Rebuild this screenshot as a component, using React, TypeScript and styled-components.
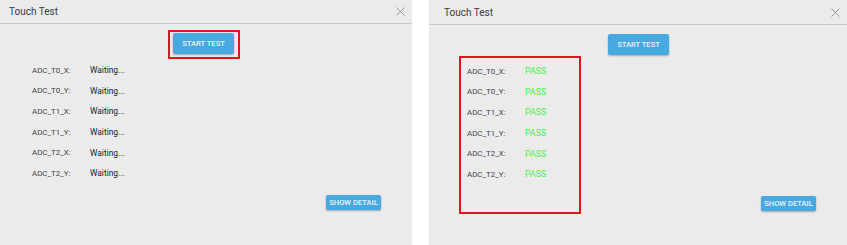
import React from 'react'
import styled, { createGlobalStyle } from 'styled-components'

const GlobalStyle = createGlobalStyle`
  html, body {
    margin: 0;
    padding: 0;
    background: #ffffff;
  }
  body {
    font-family: Roboto, "Liberation Sans", Arial, sans-serif;
    overflow: hidden;
  }
`

const channels = ['ADC_T0_X', 'ADC_T0_Y', 'ADC_T1_X', 'ADC_T1_Y', 'ADC_T2_X', 'ADC_T2_Y']

const Page = styled.div`
  display: flex;
  gap: 17px;
  width: 847px;
  height: 245px;
  overflow: hidden;
`

const Panel = styled.div<{ $shiftX: number; $shiftY: number }>`
  flex: 0 0 418px;
  height: 246px;
  margin-left: ${(p) => p.$shiftX}px;
  margin-top: ${(p) => p.$shiftY}px;
  background: #ebebeb;
  display: flex;
  flex-direction: column;
`

const Header = styled.div`
  height: 25px;
  box-sizing: border-box;
  border-bottom: 1px solid #c9c9c9;
  display: flex;
  align-items: center;
  justify-content: space-between;
  padding: 0 6px 0 15px;
`

const Title = styled.span`
  font-size: 10px;
  color: #3c3c3c;
`

const CloseButton = styled.button`
  width: 12px;
  height: 12px;
  padding: 0;
  border: none;
  background: none;
  display: flex;
  align-items: center;
  justify-content: center;
`

const ButtonRow = styled.div`
  display: flex;
  justify-content: center;
  padding-top: 9px;
  margin-left: 1px;
`

const BlueButton = styled.button<{ $small?: boolean; $marked?: boolean }>`
  position: relative;
  height: ${(p) => (p.$small ? 15 : 21)}px;
  width: ${(p) => (p.$small ? 55 : 61)}px;
  padding: 0;
  border: none;
  border-radius: 2px;
  background: #47a9e0;
  color: #e9f4fb;
  font-family: Roboto, "Liberation Sans", Arial, sans-serif;
  font-weight: 500;
  font-size: 7.6px;
  letter-spacing: 0;
  box-shadow: 0 1px 2px rgba(0, 0, 0, 0.3);
  &::after {
    content: '';
    display: ${(p) => (p.$marked ? 'block' : 'none')};
    position: absolute;
    left: -5px;
    right: -6px;
    top: -3px;
    bottom: -5px;
    border: 2px solid #e0151c;
  }
`

const Body = styled.div`
  display: flex;
  justify-content: space-between;
  align-items: flex-end;
  padding: 1px 31px 0 30px;
`

const Results = styled.div<{ $marked?: boolean }>`
  width: 122px;
  height: 158px;
  box-sizing: border-box;
  border: 2px solid ${(p) => (p.$marked ? '#e0151c' : 'transparent')};
  padding: 3px 0 0 6px;
`

const Row = styled.div`
  height: 20.6px;
  display: flex;
  align-items: center;
`

const Label = styled.span`
  width: 58px;
  font-size: 7.9px;
  color: #444444;
`

const Value = styled.span<{ $pass?: boolean }>`
  font-size: ${(p) => (p.$pass ? 8.8 : 8.4)}px;
  color: ${(p) => (p.$pass ? '#4cf04c' : '#1c1c1c')};
`

const Footer = styled.div`
  padding-bottom: 3px;
`

const CloseIcon = () => (
  <svg width="9" height="9" viewBox="0 0 9 9">
    <path d="M0.5 0.5 L8.5 8.5 M8.5 0.5 L0.5 8.5" stroke="#8e8e8e" strokeWidth="0.9" />
  </svg>
)

const TouchTestPanel = ({ passed, shiftX, shiftY }: { passed: boolean; shiftX: number; shiftY: number }) => (
  <Panel $shiftX={shiftX} $shiftY={shiftY}>
    <Header>
      <Title>Touch Test</Title>
      <CloseButton aria-label="Close">
        <CloseIcon />
      </CloseButton>
    </Header>
    <ButtonRow>
      <BlueButton $marked={!passed}>START TEST</BlueButton>
    </ButtonRow>
    <Body>
      <Results $marked={passed}>
        {channels.map((c) => (
          <Row key={c}>
            <Label>{c}:</Label>
            <Value $pass={passed}>{passed ? 'PASS' : 'Waiting...'}</Value>
          </Row>
        ))}
      </Results>
      <Footer>
        <BlueButton $small>SHOW DETAIL</BlueButton>
      </Footer>
    </Body>
  </Panel>
)

export default function App() {
  return (
    <>
      <GlobalStyle />
      <Page>
        <TouchTestPanel passed={false} shiftX={-6} shiftY={-1} />
        <TouchTestPanel passed shiftX={0} shiftY={0} />
      </Page>
    </>
  )
}
